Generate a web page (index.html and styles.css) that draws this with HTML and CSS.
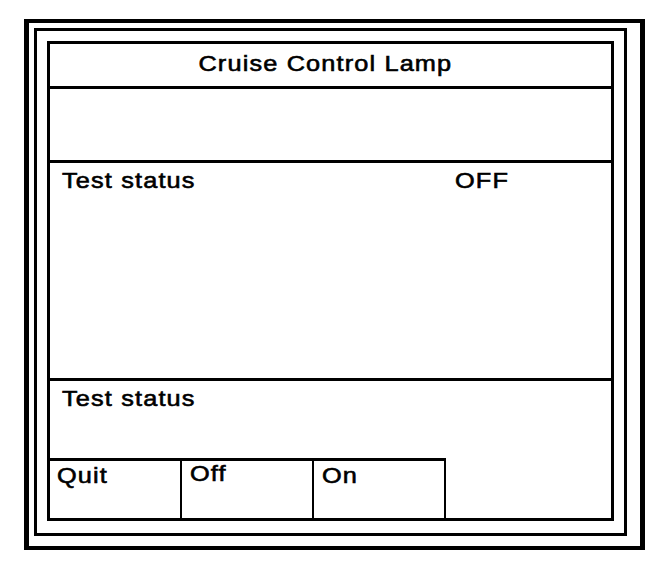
FILE: index.html
```html
<!DOCTYPE html>
<html>
<head>
<meta charset="utf-8">
<link rel="stylesheet" href="styles.css">
</head>
<body>
<div class="frame-outer">
  <div class="frame-mid">
    <div class="panel">
      <div class="title"><span class="txt center">Cruise Control Lamp</span></div>
      <div class="blank"></div>
      <div class="status">
        <span><span class="txt">Test status</span></span>
        <span><span class="txt">OFF</span></span>
      </div>
      <div class="footer">
        <div class="msg"><span class="txt">Test status</span></div>
        <div class="buttons">
          <div class="btn"><span class="txt">Quit</span></div>
          <div class="btn btn-off"><span class="txt">Off</span></div>
          <div class="btn"><span class="txt">On</span></div>
        </div>
      </div>
    </div>
  </div>
</div>
</body>
</html>
```
FILE: styles.css
```css
body {
  margin: 0;
  background: #fff;
  color: #000;
  font-family: "Liberation Sans", Arial, sans-serif;
  font-size: 22px;
  line-height: 24px;
}
.frame-outer {
  margin: 19px 0 0 24px;
  width: 621px;
  box-sizing: border-box;
  border: 5px solid #000;
  border-top-width: 4px;
  border-bottom-width: 4px;
  padding: 5px 13px 10px 5px;
}
.frame-mid {
  border: 3px solid #000;
  padding: 10px 10px 12px 10px;
}
.panel {
  border: 3px solid #000;
  height: 480px;
  box-sizing: border-box;
  display: flex;
  flex-direction: column;
}
.txt {
  display: inline-block;
  transform: scaleX(1.15);
  transform-origin: left center;
  letter-spacing: 1px;
  -webkit-text-stroke: 0.6px #000;
}
.txt.center {
  transform-origin: center center;
}
.title {
  height: 45px;
  box-sizing: border-box;
  border-bottom: 3px solid #000;
  padding: 8px 10px 0 0;
  text-align: center;
}
.blank {
  height: 74px;
  box-sizing: border-box;
  border-bottom: 3px solid #000;
}
.status {
  height: 218px;
  box-sizing: border-box;
  border-bottom: 3px solid #000;
  padding: 6px 0 0 12px;
  display: grid;
  grid-template-columns: 393px auto;
  align-items: start;
}
.footer {
  flex: 1;
  display: flex;
  flex-direction: column;
}
.msg {
  flex: 1;
  padding: 6px 0 0 12px;
}
.buttons {
  display: flex;
  align-self: flex-start;
  height: 60px;
  box-sizing: border-box;
  border-top: 3px solid #000;
}
.btn {
  width: 132px;
  box-sizing: border-box;
  border-right: 2px solid #000;
  padding: 3px 0 0 7px;
}
.btn + .btn {
  padding-left: 8px;
}
.btn-off {
  padding-top: 1px;
}
```
